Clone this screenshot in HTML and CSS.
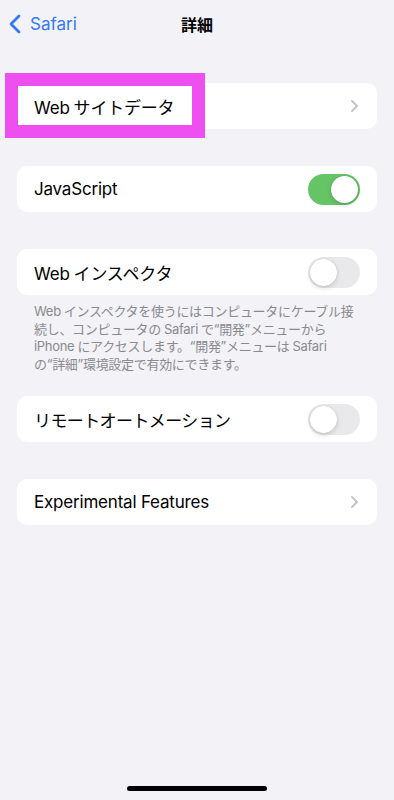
FILE: index.html
```html
<!DOCTYPE html>
<html lang="ja">
<head>
    <meta charset="UTF-8">
    <meta name="viewport" content="width=device-width, initial-scale=1.0">
    <title>詳細</title>
    <link rel="stylesheet" href="styles.css">
</head>
<body>
    <div class="screen">
        <!-- ナビゲーション -->
        <div class="nav">
            <div class="back">
                <svg class="back-icon" width="14" height="20" viewBox="0 0 14 20">
                    <path d="M11 2 L3 10 L11 18" fill="none" stroke="#3478f6" stroke-width="2.8" stroke-linecap="round" stroke-linejoin="round"/>
                </svg>
                <span>Safari</span>
            </div>
            <div class="title">詳細</div>
        </div>

        <div class="group first">
            <div class="row">
                <div class="mark"></div>
                <span class="label">Web<span class="sp"></span>サイトデータ</span>
                <svg class="chevron" width="9" height="14" viewBox="0 0 9 14">
                    <path d="M2 2 L7 7 L2 12" fill="none" stroke="#c4c4c7" stroke-width="2" stroke-linecap="round" stroke-linejoin="round"/>
                </svg>
            </div>
        </div>

        <div class="group">
            <div class="row">
                <span class="label">JavaScript</span>
                <div class="switch on"><div class="knob"></div></div>
            </div>
        </div>

        <div class="group">
            <div class="row">
                <span class="label">Web<span class="sp"></span>インスペクタ</span>
                <div class="switch"><div class="knob"></div></div>
            </div>
        </div>
        <p class="note">Web<span class="sp"></span>インスペクタを使うにはコンピュータにケーブル接<br>続し、コンピュータの<span class="sp"></span>Safari<span class="sp"></span>で“開発”メニューから<br>iPhone<span class="sp"></span>にアクセスします。“開発”メニューは<span class="sp"></span>Safari<br>の“詳細”環境設定で有効にできます。</p>

        <div class="group after-note">
            <div class="row">
                <span class="label tight">リモートオートメーション</span>
                <div class="switch"><div class="knob"></div></div>
            </div>
        </div>

        <div class="group">
            <div class="row">
                <span class="label">Experimental Features</span>
                <svg class="chevron" width="9" height="14" viewBox="0 0 9 14">
                    <path d="M2 2 L7 7 L2 12" fill="none" stroke="#c4c4c7" stroke-width="2" stroke-linecap="round" stroke-linejoin="round"/>
                </svg>
            </div>
        </div>

        <div class="home-bar"></div>
    </div>
</body>
</html>
```

FILE: styles.css
```css
body {
    margin: 0;
    background: #f2f2f7;
    font-family: Inter, "Noto Sans CJK JP", sans-serif;
    color: #000;
}
.screen {
    height: 800px;
    display: flex;
    flex-direction: column;
}
.nav {
    height: 47px;
    position: relative;
    display: flex;
    align-items: center;
    justify-content: center;
}
.back {
    position: absolute;
    left: 8px;
    top: 0;
    height: 47px;
    display: flex;
    align-items: center;
    gap: 8px;
    color: #3478f6;
    font-size: 17px;
}
.back-icon {
    margin-top: 1px;
}
.title {
    font-size: 16px;
    font-weight: 600;
}
.group {
    margin: 37px 17px 0;
    background: #fff;
    border-radius: 10px;
}
.group.first {
    margin-top: 36px;
}
.group.after-note {
    margin-top: 23px;
}
.row {
    position: relative;
    height: 46px;
    display: flex;
    align-items: center;
    justify-content: space-between;
    padding: 0 17px;
}
.label {
    position: relative;
    font-size: 17px;
    letter-spacing: -0.2px;
}
.label.tight {
    letter-spacing: -0.6px;
}
.sp {
    display: inline-block;
    width: 4px;
}
.note .sp {
    width: 3px;
}
.chevron {
    margin-right: 1px;
}
.mark {
    position: absolute;
    left: -12px;
    top: -10px;
    width: 174px;
    height: 39px;
    border: 13px solid #ee4ff0;
    background: #fff;
}
.switch {
    width: 52px;
    height: 31px;
    border-radius: 16px;
    background: #e9e9eb;
    position: relative;
}
.switch.on {
    background: #65c466;
}
.knob {
    position: absolute;
    top: 2px;
    left: 2px;
    width: 27px;
    height: 27px;
    border-radius: 50%;
    background: #fff;
    box-shadow: 0 2px 5px rgba(0, 0, 0, 0.15), 0 0 1px rgba(0, 0, 0, 0.2);
}
.switch.on .knob {
    left: 23px;
}
.note {
    margin: 8px 34px 0;
    font-size: 13px;
    line-height: 17.5px;
    letter-spacing: -0.3px;
    color: #8a8a8e;
    white-space: nowrap;
}
.home-bar {
    margin: auto auto 9px;
    width: 140px;
    height: 5px;
    border-radius: 3px;
    background: #000;
}
```
